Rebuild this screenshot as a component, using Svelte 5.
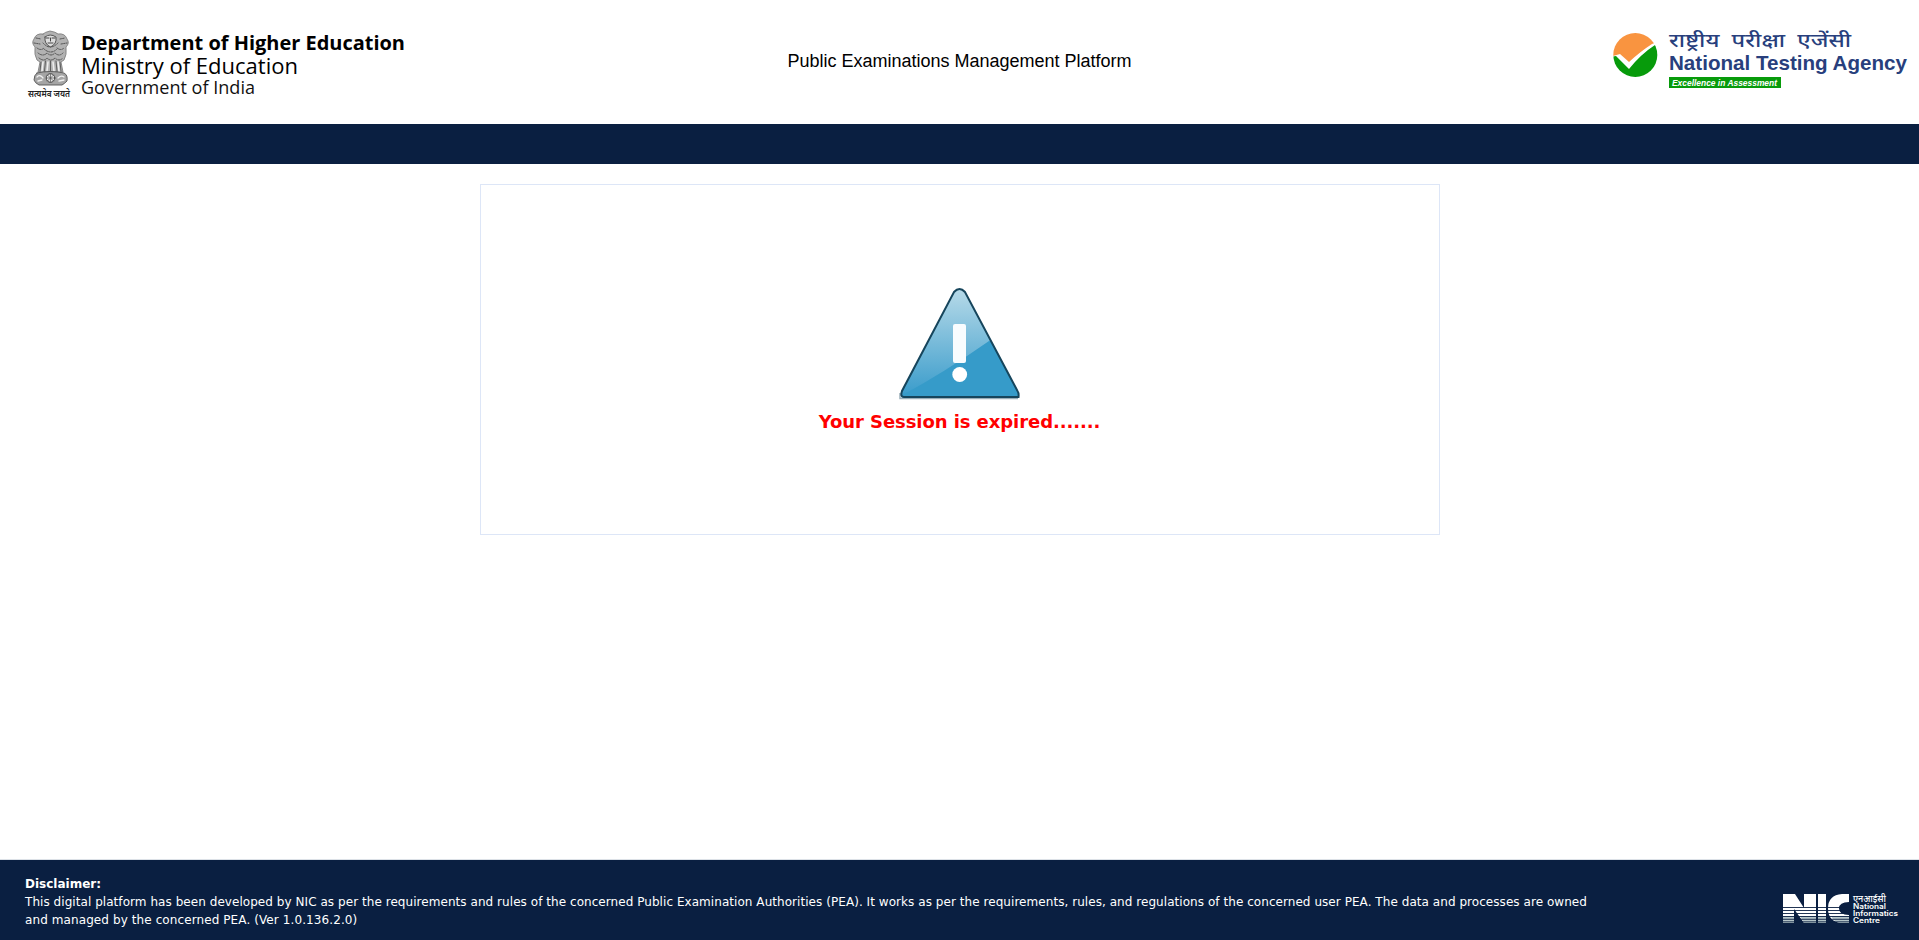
<script>
  const stripes = [14, 17, 20, 23, 25.8, 28.4];
</script>

<div class="page">
  <header>
    <svg class="ministry" width="420" height="124" viewBox="0 0 420 124" aria-label="Ministry of Education">
      <g stroke-linecap="round" stroke-linejoin="round" transform="translate(0 1)">
        <path fill="#b2b2b2" stroke="#777" stroke-width=".8" d="M43 33 Q45 31 50 30 Q56 31 58 33 Q65 32 67 38 Q70 42 66 46 Q67 54 64 59 L61 61 L63 71 L38 71 L40 61 L37 59 Q34 54 35 46 Q31 42 34 38 Q36 32 43 33Z"/>
        <path fill="#ddd" stroke="#555" stroke-width="1" d="M45 36 Q50 32 56 36 Q57 43 50.500 46 Q44 43 45 36Z"/>
        <path fill="none" stroke="#555" stroke-width="1" stroke-dasharray="1.500 1.200" d="M36 37l5 1M34 42l6 1M60 38l5 -1M61 43l6 -1M37 47q4 3 7 0M57 47q4 3 7 0M38 52q5 4 9 0q4 4 8 0q4 4 8 0M39 57q5 4 8 0q4 4 8 0q4 4 8 0M43 42q7 8 15 0M44 48q7 6 13 0"/>
        <path fill="none" stroke="#444" stroke-width="1" d="M46 37h3m3 0h3M50.500 37v3M48 42h5"/>
        <path fill="none" stroke="#eee" stroke-width="1.600" d="M43 61l-1 9M48 61l-1 9M53 61l1 9M58 61l1 9"/>
        <path fill="none" stroke="#555" stroke-width=".9" d="M41 61l-1 9M45.500 60l-1 10M50.500 60v10M56 60l1 10M60 61l1 9"/>
        <path fill="#a5a5a5" stroke="#555" stroke-width=".9" d="M37 72Q50 69 64 72Q68 74 67 80Q64 83 62 84H39Q35 82 34 79Q34 74 37 72Z"/>
        <circle cx="50.500" cy="77" r="4.300" fill="#e8e8e8" stroke="#444" stroke-width="1"/>
        <path stroke="#555" stroke-width=".7" d="M50.500 73v8M46.500 77h8M47.500 74l6 6M53.500 74l-6 6"/>
        <path fill="none" stroke="#eee" stroke-width="1.300" d="M37 76q3-3 6 1M38 80l4-1M58 77q3-3 6-1M59 80l5-1"/>
      </g>
      <text x="28" y="96.500" font-size="9.500" font-weight="600" fill="#222" textLength="42" lengthAdjust="spacingAndGlyphs">सत्यमेव जयते</text>
      <text class="open" x="81" y="50" font-size="19.300" font-weight="700" textLength="324" lengthAdjust="spacingAndGlyphs">Department of Higher Education</text>
      <text class="open" x="81" y="74" font-size="21.500" textLength="217" lengthAdjust="spacingAndGlyphs">Ministry of Education</text>
      <text class="open" x="81" y="94" font-size="17.500" fill="#111" textLength="174" lengthAdjust="spacingAndGlyphs">Government of India</text>
    </svg>
    <h1>Public Examinations Management Platform</h1>
    <svg class="nta" width="319" height="124" viewBox="1600 0 319 124" aria-label="National Testing Agency">
      <defs><clipPath id="disc"><circle cx="1635.300" cy="55" r="22"/></clipPath></defs>
      <g clip-path="url(#disc)">
        <rect x="1610" y="30" width="50" height="50" fill="#fff"/>
        <path fill="#f99440" d="M1610 30H1660V41L1652 44Q1641 51 1629 62L1620 54L1610 57Z"/>
        <path fill="#079b0b" d="M1610 57L1616 56L1629 69Q1641 54 1655 45L1660 43V80H1610Z"/>
      </g>
      <text x="1669" y="47" font-size="18.500" font-weight="500" fill="#283f7d" textLength="182" lengthAdjust="spacingAndGlyphs">राष्ट्रीय&nbsp; परीक्षा&nbsp; एजेंसी</text>
      <text class="arial" x="1669" y="70" font-size="20.500" font-weight="700" fill="#283f7d" textLength="238" lengthAdjust="spacingAndGlyphs">National Testing Agency</text>
      <rect x="1669" y="77" width="112" height="11" fill="#079b0b"/>
      <text class="arial" x="1672" y="85.500" font-size="8.800" font-weight="700" font-style="italic" fill="#fff" textLength="105" lengthAdjust="spacingAndGlyphs">Excellence in Assessment</text>
    </svg>
  </header>
  <nav></nav>
  <main>
    <section>
      <svg width="122" height="114" viewBox="0 0 122 114" aria-label="Warning">
        <defs>
          <linearGradient id="shine" x1="0" y1="0" x2="0" y2="1"><stop stop-color="#b9dbe9"/><stop offset="1" stop-color="#369aca"/></linearGradient>
          <clipPath id="tri"><path d="M55 5Q60.500-1 66 5L119 105V110.500H5Q0 111 3 104Z"/></clipPath>
        </defs>
        <path d="M1 106V111.500H119" fill="none" stroke="#9aaeb9" stroke-width="1.500"/>
        <g clip-path="url(#tri)">
          <rect width="122" height="112" fill="url(#shine)"/>
          <path fill="#369bc9" d="M0 110Q43 87 90 54L122 50V114H0Z"/>
        </g>
        <path d="M55 5Q60.500-1 66 5L118.500 104Q120 106 119.500 110H5Q1 110 3 104Z" fill="none" stroke="#16455c" stroke-width="2"/>
        <rect x="54" y="37" width="13" height="39" rx="2" fill="#f8fcfe"/>
        <circle cx="60.700" cy="87.500" r="7.400" fill="#fff"/>
      </svg>
      <p>Your Session is expired.......</p>
    </section>
  </main>
  <footer>
    <div class="disclaimer">
      <strong>Disclaimer:</strong>
      <p class="first">This digital platform has been developed by NIC as per the requirements and rules of the concerned Public Examination Authorities (PEA). It works as per the requirements, rules, and regulations of the concerned user PEA. The data and processes are owned</p>
      <p class="second">and managed by the concerned PEA. (Ver 1.0.136.2.0)</p>
    </div>
    <svg class="nic" width="120" height="34" viewBox="0 0 120 34" aria-label="National Informatics Centre">
      <path fill="#fff" d="M0 1H12L21 15V1H33V30H21L11 16V30H0ZM35 1H43V30H35ZM66 1V9Q56 9 56 15.500Q56 22 66 22V30H59Q45 29 45 15.500Q45 2 59 1Z"/>
      <path fill="#b4c4c8" d="M0 23H11V30H0ZM17 23H33V30H21ZM35 23H43V30H35ZM48 23H66V30H57Q51 29 48 23Z"/>
      {#each stripes as y}
        <rect x="0" {y} width="67" height=".9" fill="#0a1f41"/>
      {/each}
      <text x="70" y="8.500" font-size="9" font-weight="500" textLength="33" lengthAdjust="spacingAndGlyphs">एनआईसी</text>
      <text class="inter" x="70" y="15.500" font-size="7.200" font-weight="600" textLength="33" lengthAdjust="spacingAndGlyphs">National</text>
      <text class="inter" x="70" y="22.500" font-size="7.200" font-weight="600" textLength="45" lengthAdjust="spacingAndGlyphs">Informatics</text>
      <text class="inter" x="70" y="29.700" font-size="7.200" font-weight="600" textLength="27" lengthAdjust="spacingAndGlyphs">Centre</text>
    </svg>
  </footer>
</div>

<style>
  :global(body) { margin: 0; background: #fff; }
  .page { height: 940px; display: flex; flex-direction: column; overflow: hidden; }
  header { height: 124px; display: grid; grid-template-columns: 420px 1fr 319px; }
  svg { display: block; }
  svg text { font-family: "Noto Sans", "Noto Sans Devanagari", sans-serif; }
  svg .open { font-family: "Open Sans", sans-serif; }
  svg .arial { font-family: "Liberation Sans", Arial, sans-serif; }
  svg .inter { font-family: Inter, sans-serif; }
  h1 { margin: 51px 0 0; padding-right: 101px; text-align: center; font: 400 18px/21px "Liberation Sans", Arial, sans-serif; color: #000; }
  nav { height: 40px; background: #0a1f41; }
  main { flex: 1; padding-top: 20px; }
  section { box-sizing: border-box; width: 960px; height: 351px; margin: 0 auto; border: 1px solid #dde6f7; display: flex; flex-direction: column; align-items: center; padding-top: 102px; }
  section p { margin: 10px 0 0; color: #f00; font: 700 18px/21px Verdana, "DejaVu Sans", sans-serif; letter-spacing: -.07px; white-space: nowrap; }
  footer { height: 80px; background: #0a1f41; border-top: 1px solid #dce1e7; display: flex; justify-content: space-between; color: #fff; }
  .disclaimer { padding: 15px 0 0 25px; font: 12px/18px Verdana, "DejaVu Sans", sans-serif; white-space: nowrap; }
  .disclaimer strong { display: block; }
  .disclaimer p { margin: 0; }
  .first { letter-spacing: .053px; }
  .second { letter-spacing: .095px; }
  .nic { margin: 33px 16px 0 0; fill: #fff; }
</style>
